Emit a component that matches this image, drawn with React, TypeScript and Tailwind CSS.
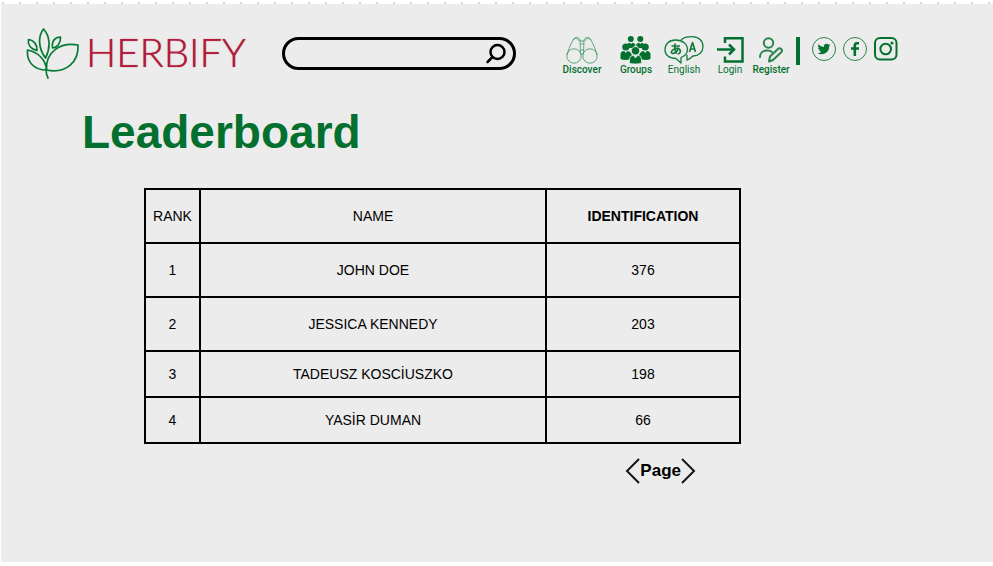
import React from "react";

const rows = [
  { rank: 1, name: "JOHN DOE", count: 376, height: "h-[54px]" },
  { rank: 2, name: "JESSICA KENNEDY", count: 203, height: "h-[54px]" },
  { rank: 3, name: "TADEUSZ KOSCİUSZKO", count: 198, height: "h-[46px]" },
  { rank: 4, name: "YASİR DUMAN", count: 66, height: "h-[46px]" },
];

function Leaf() {
  return (
    <svg width="54" height="52" viewBox="0 0 54 52" fill="none" stroke="#077a34" strokeWidth="1.7" strokeLinejoin="round" strokeLinecap="round" aria-hidden="true">
      <path d="M17.500 1C12 8 12 20 19.500 30C25 19 24 8 17.500 1Z" />
      <path d="M2.500 11.500C1.500 16 4 20.500 11 22.500C11.500 17 8 12 2.500 11.500Z" />
      <path d="M34.500 9C29 9 25.500 13 26.500 20C31 20 35 15 34.500 9Z" />
      <path d="M1.500 22C.5 34 8 42 20.500 42C20 32 12 24 1.500 22Z" />
      <path d="M20.500 42C19.500 24 34 14 52 17C53 34 40 46 20.500 42Z" />
      <path d="M20 41C20 44 21 48 22 50" />
    </svg>
  );
}

function Binoculars() {
  return (
    <svg width="32" height="28" viewBox="0 0 32 28" fill="none" stroke="#3d9460" strokeWidth=".8" aria-hidden="true">
      <circle cx="8" cy="20" r="7.200" />
      <circle cx="24" cy="20" r="7.200" />
      <path d="M1 19C2 14 5 8 7 4C8 1 13 0 14 4L14.500 18M31 19C30 14 27 8 25 4C24 1 19 0 18 4L17.500 18M7 4C9 1.800 12 2 13 5M25 4C23 1.800 20 2 19 5M14 5H18M14.500 8H17.500M14.500 14H17.500M14.500 18H17.500" />
    </svg>
  );
}

function People() {
  return (
    <svg width="32" height="28" viewBox="0 0 32 28" fill="#04702f" aria-hidden="true">
      <circle cx="10.800" cy="3" r="3" />
      <circle cx="20.300" cy="3" r="3" />
      <path d="M7 8.500Q8 6.800 10 6.800L11 8L12.500 6.800Q15 7 15.500 9L13 12H9.500ZM24 8.500Q23 6.800 21.500 6.800L20.300 8L19 6.800Q16.500 7 16 9L18.500 12H22Z" />
      <circle cx="5.800" cy="11" r="3.600" />
      <circle cx="25.200" cy="11" r="3.600" />
      <path d="M.5 23V18.500Q.5 15 4.300 15L5.800 17L7.500 15Q9.500 15 10.500 16.500L12 19L9.500 23.500Q4 24.500.5 23ZM30.500 23V18.500Q30.500 15 26.700 15L25.200 17L23.500 15Q21.500 15 20.500 16.500L19 19L21.500 23.500Q27 24.500 30.500 23Z" />
      <path stroke="#ececec" strokeWidth=".8" d="M9.500 27.500V23Q9.500 19.300 13.500 19.300L15.500 22L17.500 19.300Q21.500 19.300 21.500 23V27.500Q15.500 28.500 9.500 27.500Z" />
      <circle cx="15.500" cy="14.800" r="4.200" stroke="#ececec" strokeWidth=".8" />
    </svg>
  );
}

function Language() {
  return (
    <svg width="40" height="28" viewBox="0 0 40 28" fill="none" stroke="#137c3c" strokeWidth="1.300" strokeLinejoin="round" aria-hidden="true">
      <path d="M17 4C20 1 24 .7 28 .7C35 .7 39 5 39 10.500C39 16 35 20 29 20C27 22 25 23.500 23 24V19" />
      <path d="M11.500 4C5 4 1 8 1 13.500C1 19 5 22.500 12 22.500L17 27V21.500C21 20 23.500 17.500 23.500 13.500C23.500 8 18.500 4 11.500 4Z" />
      <path strokeWidth="1.700" d="M25.500 16L28.500 6.500L31.500 16M26.500 13H30.500" />
      <path strokeWidth="1.700" d="M7.500 10H16M11 7.500C10.500 12 11 15 12.500 17.500M14.500 11.500C13.500 15 11 17.500 8.500 17.500C6 17 8 13 12 12.500C17 12 18 17 13.500 18" />
    </svg>
  );
}

function LoginIcon() {
  return (
    <svg width="27" height="26" viewBox="0 0 27 26" fill="none" stroke="#04702f" strokeWidth="2.500" aria-hidden="true">
      <path d="M8 6V1.300H25.500V24.500H8V19.500M0 12.500H17" />
      <path d="M12 7.500L17 12.500L12 17.500" />
    </svg>
  );
}

function RegisterIcon() {
  return (
    <svg width="24" height="26" viewBox="0 0 24 26" fill="none" stroke="#2a854c" strokeWidth="2" strokeLinecap="round" strokeLinejoin="round" aria-hidden="true">
      <circle cx="9.500" cy="6" r="4.700" />
      <path d="M1 20C1 16 4 13.500 8 13.500C10 13.500 12 14 13 15" />
      <path d="M10 24.500L11 19.500L19.500 11.500C21.500 10.500 24 13 22.500 15L14 23Z" />
    </svg>
  );
}

function Twitter() {
  return (
    <svg width="24" height="24" viewBox="0 0 24 24" aria-hidden="true">
      <circle cx="12" cy="12" r="11.500" fill="none" stroke="#2a854c" />
      <g transform="translate(5.500 5.500) scale(.54)">
        <path fill="#04702f" d="M23.950 4.600a10 10 0 0 1-2.820.77 4.900 4.900 0 0 0 2.160-2.720 9.800 9.800 0 0 1-3.130 1.200A4.920 4.920 0 0 0 11.780 8.300 13.900 13.900 0 0 1 1.640 3.200a4.920 4.920 0 0 0 1.520 6.500 4.900 4.900 0 0 1-2.230-.6v.060a4.920 4.920 0 0 0 3.950 4.830 5 5 0 0 1-2.210.080 4.940 4.940 0 0 0 4.600 3.420A9.900 9.900 0 0 1 0 19.500a14 14 0 0 0 7.550 2.200c9.050 0 14-7.500 14-13.990 0-.2 0-.4-.020-.6a9.900 9.900 0 0 0 2.420-2.510Z" />
      </g>
    </svg>
  );
}

function Facebook() {
  return (
    <svg width="24" height="24" viewBox="0 0 24 24" aria-hidden="true">
      <circle cx="12" cy="12" r="11.500" fill="none" stroke="#2a854c" />
      <path fill="none" stroke="#04702f" strokeWidth="2.600" d="M16 6.300H14C12.500 6.300 11.800 7 11.800 8.500V19M8 11.500H16" />
    </svg>
  );
}

function Instagram() {
  return (
    <svg width="24" height="24" viewBox="0 0 24 24" fill="none" stroke="#04702f" strokeWidth="2" aria-hidden="true">
      <rect x="1" y="1" width="21.500" height="21.500" rx="5" />
      <circle cx="11.700" cy="12" r="5.300" />
      <circle cx="18" cy="6" r="1.500" fill="#04702f" stroke="none" />
    </svg>
  );
}

function NavItem({ label, bold, className, children }: { label: string; bold?: boolean; className: string; children: React.ReactNode }) {
  return (
    <a href="#" className={`flex shrink-0 flex-col items-center ${className}`}>
      <span className="flex h-7 items-center">{children}</span>
      <span className={`text-[10px] leading-3 ${bold ? "font-medium" : ""}`}>{label}</span>
    </a>
  );
}

export default function App() {
  return (
    <div className="flex min-h-screen flex-col bg-white pt-0.5 pb-1 pl-px font-['Liberation_Sans',Arial,sans-serif] text-black">
      <div className="h-0.5 bg-[linear-gradient(to_right,transparent_1px,#d5d8dc_1px,#d5d8dc_3px,transparent_3px)] bg-[length:17px_2px]" />
      <div className="flex-1 bg-[#ececec]">
        <header className="flex items-start pt-6 pl-[25px]">
          <a href="#" className="flex w-64 shrink-0 items-start gap-1.5 text-[#b01c3a]">
            <Leaf />
            <span className="font-['Lato',sans-serif] text-[40px] leading-[48px] font-light [text-shadow:0_0_1px_#b01c3a]">HERBIFY</span>
          </a>
          <form className="mt-[9px] flex h-[33px] w-[234px] shrink-0 items-center rounded-full border-[3px] border-black pr-1.5 pl-3">
            <input type="search" aria-label="Search" className="min-w-0 flex-1 bg-transparent text-sm outline-none" />
            <button type="button" aria-label="Submit search">
              <svg width="22" height="22" viewBox="0 0 22 22" fill="none" stroke="black" strokeWidth="2.500" strokeLinecap="round" aria-hidden="true">
                <circle cx="12.500" cy="9" r="7" />
                <path d="M7.500 14L2.500 19" />
              </svg>
            </button>
          </form>
          <nav aria-label="Main" className="mt-2 ml-[42px] flex items-start font-['Roboto',sans-serif] text-[#04702f]">
            <NavItem label="Discover" bold className="w-12"><Binoculars /></NavItem>
            <NavItem label="Groups" bold className="ml-1.5 w-12"><People /></NavItem>
            <NavItem label="English" className="w-12"><Language /></NavItem>
            <NavItem label="Login" className="ml-2 w-7"><LoginIcon /></NavItem>
            <NavItem label="Register" bold className="ml-1.5 w-[42px]"><RegisterIcon /></NavItem>
            <span className="mt-px ml-1 h-7 w-1 bg-[#04702f]" />
            <div className="mt-px ml-3 flex gap-[7px]">
              <a href="#" aria-label="Twitter"><Twitter /></a>
              <a href="#" aria-label="Facebook"><Facebook /></a>
              <a href="#" aria-label="Instagram"><Instagram /></a>
            </div>
          </nav>
        </header>
        <main className="pt-6">
          <h1 className="pl-[81px] text-[46px] leading-[56px] font-bold text-[#04702f]">Leaderboard</h1>
          <div className="mt-7 ml-[143px] w-[597px] max-w-full">
            <table className="w-full table-fixed border-collapse text-center text-sm">
              <colgroup>
                <col className="w-[55px]" />
                <col />
                <col className="w-[194px]" />
              </colgroup>
              <thead>
                <tr className="h-[54px]">
                  <th scope="col" className="border-2 border-black font-normal">RANK</th>
                  <th scope="col" className="border-2 border-black font-normal">NAME</th>
                  <th scope="col" className="border-2 border-black font-bold">IDENTIFICATION</th>
                </tr>
              </thead>
              <tbody>
                {rows.map((row) => (
                  <tr key={row.rank} className={row.height}>
                    <td className="border-2 border-black">{row.rank}</td>
                    <td className="border-2 border-black">{row.name}</td>
                    <td className="border-2 border-black">{row.count}</td>
                  </tr>
                ))}
              </tbody>
            </table>
            <nav aria-label="Pagination" className="mt-3.5 mr-[45px] flex items-center justify-end">
              <button type="button" aria-label="Previous page">
                <svg width="15" height="26" viewBox="0 0 15 26" fill="none" stroke="#151515" strokeWidth="2" aria-hidden="true"><path d="M14 1L2 13L14 25" /></svg>
              </button>
              <span className="text-[17px] leading-6 font-bold">Page</span>
              <button type="button" aria-label="Next page">
                <svg width="15" height="26" viewBox="0 0 15 26" fill="none" stroke="#151515" strokeWidth="2" aria-hidden="true"><path d="M1 1L13 13L1 25" /></svg>
              </button>
            </nav>
          </div>
        </main>
      </div>
    </div>
  );
}
